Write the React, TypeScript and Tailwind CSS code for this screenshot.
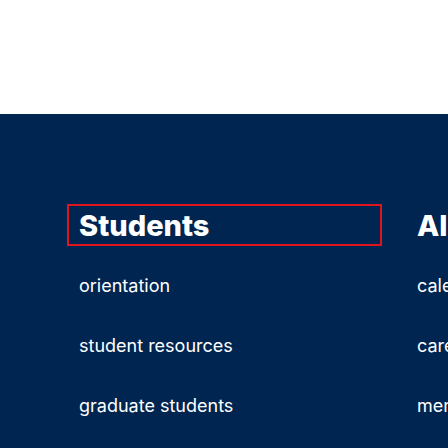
import React from 'react';

const columns = [
  {
    title: 'Students',
    links: ['orientation', 'student resources', 'graduate students'],
    focused: true,
  },
  {
    title: 'Alumni',
    links: ['calendar', 'careers', 'membership'],
    focused: false,
  },
];

const App: React.FC = () => {
  return (
    <div className="w-[448px] h-[448px] overflow-hidden bg-white" style={{ fontFamily: 'Inter, Lato, sans-serif' }}>
      <div className="h-[114px] bg-white" />
      <div className="h-[334px] bg-[#002551] pt-[90px] pl-[67px]">
        <div className="grid grid-cols-[315px_315px] gap-x-[23px] w-max">
          {columns.map((col) => (
            <div key={col.title}>
              <h2
                className={`h-[42px] px-[12px] flex items-center text-[29px] font-extrabold text-white leading-none ${
                  col.focused ? 'outline outline-2 outline-[#e0141e] -outline-offset-2' : ''
                }`}
              >
                {col.title}
              </h2>
              <ul className="mt-[29px] flex flex-col gap-[38px]">
                {col.links.map((link) => (
                  <li key={link} className="px-[12px] text-[18px] leading-[22px] text-white">
                    {link}
                  </li>
                ))}
              </ul>
            </div>
          ))}
        </div>
      </div>
    </div>
  );
};

export default App;
